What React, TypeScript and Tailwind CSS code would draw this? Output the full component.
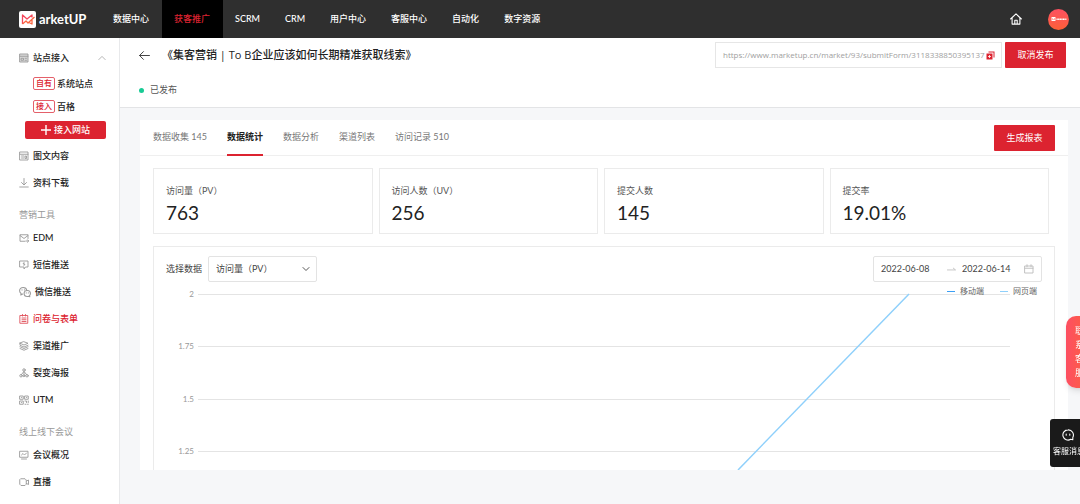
import type { ReactNode } from 'react';
import { clsx } from 'clsx';

interface NavItem {
  label: string;
  active?: boolean;
}

interface MenuItem {
  label: string;
  icon: ReactNode;
  active?: boolean;
}

const NAV: NavItem[] = [
  { label: '数据中心' },
  { label: '获客推广', active: true },
  { label: 'SCRM' },
  { label: 'CRM' },
  { label: '用户中心' },
  { label: '客服中心' },
  { label: '自动化' },
  { label: '数字资源' },
];

function Icon({ children, size = 'size-2.5', className }: { children: ReactNode; size?: string; className?: string }) {
  return (
    <svg
      viewBox="0 0 20 20"
      className={clsx('shrink-0', size, className)}
      fill="none"
      stroke="currentColor"
      strokeWidth="1.8"
      strokeLinecap="round"
      strokeLinejoin="round"
      aria-hidden="true"
    >
      {children}
    </svg>
  );
}

const siteIcon = (
  <Icon>
    <rect x="2" y="2" width="16" height="16" fill="#dcdcdc" />
    <path d="M2 6.500h16M5 10.500h4v4H5zM12 10.500h3M12 14.500h3" />
  </Icon>
);

const articleIcon = (
  <Icon>
    <path d="M2 2h16v16H2zM2 6.500h16M5 10h5M5 14h5M13 10h2v5h-2z" />
  </Icon>
);

const downloadIcon = (
  <Icon>
    <path d="M10 1v12M5 9l5 5 5-5M1.500 18h17" />
  </Icon>
);

const mailIcon = (
  <Icon>
    <path d="M18 11V3.500H2v13h10M2 5l8 6 8-6M14 16h5M17 13.500l2.500 2.500-2.500 2.500" />
  </Icon>
);

const smsIcon = (
  <Icon>
    <path d="M2 2h16v12h-5l-3 4v-4H2zM10 5l-2 3h4l-2 3" />
  </Icon>
);

const wechatIcon = (
  <Icon size="size-3">
    <path d="M13 7.500C12.500 4 10 2.500 7 2.500 3.500 2.500 1 5 1 8c0 2 1 3.500 2.500 4.500L3 15l3-1.500" />
    <path d="M19 12.500c0-2.800-2.200-5-5.200-5s-5.300 2.200-5.300 5 2.300 5 5.300 5c.8 0 1.500-.1 2.200-.4l2 .9-.4-1.900c.9-1 1.400-2.200 1.400-3.600z" />
    <path d="M5 6.500h.1M9 6.500h.1M12 11.500h.1M15.500 11.500h.1" />
  </Icon>
);

const formIcon = (
  <Icon>
    <path d="M2.500 3h15v15.500h-15zM7 1v3M13 1v3M6 8h8M6 11.500h8M6 15h8" />
  </Icon>
);

const layersIcon = (
  <Icon>
    <path d="M10 1.500l8 3-8 3.500-8-3.500zM2 4.500v4l8 3.500 8-3.500M2 11.500l8 3.500 8-3.500M2 15l8 3.500 8-3.500" />
  </Icon>
);

const fissionIcon = (
  <Icon>
    <circle cx="10" cy="4" r="2.500" />
    <circle cx="4" cy="15.500" r="2.500" />
    <circle cx="10" cy="15.500" r="2" />
    <circle cx="16" cy="15.500" r="2.500" />
    <path d="M10 6.500v7M9 8l-4 5M11 8l4 5" />
  </Icon>
);

const utmIcon = (
  <Icon>
    <path d="M2 2h6.500v6.500H2zM12 2h6.500v6.500H12zM2 12h6.500v6.500H2zM12 12h3v3M18.500 12v3M12 18.500h2M18.500 18.500h-1.500M5 5h.5M15 5h.5M5 15h.5" />
  </Icon>
);

const boardIcon = (
  <Icon>
    <path d="M2 2.500h16v12H2zM5 10l3-3 3 3 4-4M5 18h10" />
  </Icon>
);

const videoIcon = (
  <Icon>
    <path d="M4 3.500h8l2.500 2.500v8.500L12 17H4l-2.500-2.500V6zM15 8l4-2v9l-4-2" />
  </Icon>
);

const CONTENT_MENU: MenuItem[] = [
  { label: '图文内容', icon: articleIcon },
  { label: '资料下载', icon: downloadIcon },
];

const TOOL_MENU: MenuItem[] = [
  { label: 'EDM', icon: mailIcon },
  { label: '短信推送', icon: smsIcon },
  { label: '微信推送', icon: wechatIcon },
  { label: '问卷与表单', icon: formIcon, active: true },
  { label: '渠道推广', icon: layersIcon },
  { label: '裂变海报', icon: fissionIcon },
  { label: 'UTM', icon: utmIcon },
];

const MEETING_MENU: MenuItem[] = [
  { label: '会议概况', icon: boardIcon },
  { label: '直播', icon: videoIcon },
];

const SITES = [
  { tag: '自有', label: '系统站点' },
  { tag: '接入', label: '百格' },
];

const TABS: NavItem[] = [
  { label: '数据收集 145' },
  { label: '数据统计', active: true },
  { label: '数据分析' },
  { label: '渠道列表' },
  { label: '访问记录 510' },
];

const STATS = [
  { label: '访问量（PV）', value: '763' },
  { label: '访问人数（UV）', value: '256' },
  { label: '提交人数', value: '145' },
  { label: '提交率', value: '19.01%' },
];

const TICKS = [
  { label: '2', y: 11 },
  { label: '1.75', y: 63 },
  { label: '1.5', y: 116 },
  { label: '1.25', y: 168 },
];

function Logo() {
  return (
    <a href="#" className="flex w-[101px] shrink-0 items-center gap-[3px] pl-[19px] text-[13px] font-bold text-white">
      <svg viewBox="0 0 34 34" className="size-[17px] shrink-0" aria-hidden="true">
        <rect width="34" height="34" rx="4" fill="#fff" />
        <path d="M7 26V8l9 8 10-8v5" fill="none" stroke="#f4475c" strokeWidth="2.600" strokeLinejoin="round" />
        <path d="M7 26l7-6 4 4 13-12M26 18v8l-6-3" fill="none" stroke="#fb6440" strokeWidth="2.600" strokeLinejoin="round" />
      </svg>
      arketUP
    </a>
  );
}

function MenuList({ items }: { items: MenuItem[] }) {
  return (
    <ul>
      {items.map((item) => (
        <li key={item.label}>
          <a
            href="#"
            className={clsx(
              'flex h-[27px] items-center gap-1 pl-[19px] font-medium',
              item.active ? 'text-[#dc2330]' : 'text-[#222]'
            )}
          >
            <span className={clsx('flex', item.active ? 'text-[#e0505a]' : 'text-[#999]')}>{item.icon}</span>
            {item.label}
          </a>
        </li>
      ))}
    </ul>
  );
}

function Sidebar() {
  return (
    <aside className="w-[120px] shrink-0 border-r border-[#e8e9eb] bg-white pt-1.5">
      <button type="button" className="flex h-[27px] w-full items-center gap-1 pr-[13px] pl-[19px] font-medium text-[#222]">
        <span className="flex text-[#999]">{siteIcon}</span>
        站点接入
        <Icon size="size-2" className="ml-auto text-[#999]">
          <path d="M2 14l8-8 8 8" />
        </Icon>
      </button>
      <ul className="mt-px">
        {SITES.map((site) => (
          <li key={site.tag}>
            <a href="#" className="flex h-[23px] items-center gap-[2px] pl-[33px] font-medium text-[#222]">
              <span className="rounded-xs border border-[#e4606a] px-[2px] text-[8px] leading-[11px] text-[#dc2330]">{site.tag}</span>
              {site.label}
            </a>
          </li>
        ))}
      </ul>
      <button
        type="button"
        className="mt-[3px] mb-[3px] ml-[25px] flex h-[18px] w-[81px] items-center justify-center gap-[3px] rounded-xs bg-[#dc2330] font-medium text-white"
      >
        <svg viewBox="0 0 10 10" className="size-2.5" aria-hidden="true">
          <path d="M5 0v10M0 5h10" stroke="currentColor" strokeWidth="1.400" />
        </svg>
        接入网站
      </button>
      <MenuList items={CONTENT_MENU} />
      <h2 className="mt-2.5 pl-[19px] leading-[18px] text-[#999]">营销工具</h2>
      <MenuList items={TOOL_MENU} />
      <h2 className="mt-2.5 pl-[19px] leading-[18px] text-[#999]">线上线下会议</h2>
      <MenuList items={MEETING_MENU} />
    </aside>
  );
}

function PageHeader() {
  return (
    <div className="border-b border-[#e3e4e6] bg-white pt-1 pr-[14px] pl-[19px]">
      <div className="flex items-center">
        <button type="button" aria-label="返回" className="mr-3 text-[#444]">
          <Icon size="size-[11px]">
            <path d="M19 10H1M8 3l-7 7 7 7" />
          </Icon>
        </button>
        <h1 className="font-['Open_Sans','Noto_Sans_CJK_SC',sans-serif] text-[11px] font-medium text-[#222]">
          《集客营销 | To B企业应该如何长期精准获取线索》
        </h1>
        <div className="ml-auto flex h-[26px] w-[287px] items-center border border-[#e6e6e6] pr-1.5 pl-[7px]">
          <input
            type="text"
            readOnly
            aria-label="表单链接"
            value="https://www.marketup.cn/market/93/submitForm/3118338850395137"
            className="min-w-0 flex-1 font-['Open_Sans',sans-serif] text-[8px] text-[#a0a0a0] outline-none"
          />
          <button type="button" aria-label="复制" className="text-[#dc2330]">
            <svg viewBox="0 0 18 18" className="size-[9px]" aria-hidden="true">
              <path d="M5 1h12v12h-2V3H5z" fill="currentColor" />
              <path d="M1 5h12v12H1z" fill="currentColor" />
              <path d="M7 8v6M4 11h6" stroke="#fff" strokeWidth="1.600" />
            </svg>
          </button>
        </div>
        <button type="button" className="ml-[3px] h-[26px] w-[61px] rounded-[1px] bg-[#dc2330] text-white">
          取消发布
        </button>
      </div>
      <div className="mt-3.5 mb-[9px] flex items-center gap-1.5 text-[#555] leading-4">
        <span className="size-[5px] rounded-full bg-[#18cb95]" />
        已发布
      </div>
    </div>
  );
}

function TrendChart() {
  return (
    <div className="relative">
      <svg viewBox="0 0 900 187" className="block w-full" role="img" aria-label="访问量趋势">
        {TICKS.map((tick) => (
          <g key={tick.label}>
            <text x="40" y={tick.y + 3} textAnchor="end" fontSize="8" fill="#999">
              {tick.label}
            </text>
            <path d={`M44 ${tick.y + 0.5}H856`} stroke="#e4e4e4" />
          </g>
        ))}
        <path d="M755 11L584 187" fill="none" stroke="#8fd0fb" strokeWidth="1.500" />
      </svg>
      <ul className="absolute top-0.5 right-[17px] flex gap-4 text-[8px] leading-3 text-[#666]">
        <li className="flex items-center gap-[5px]">
          <span className="h-px w-2 bg-[#3b9ff5]" />
          移动端
        </li>
        <li className="flex items-center gap-[5px]">
          <span className="h-px w-2 bg-[#8fd0fb]" />
          网页端
        </li>
      </ul>
    </div>
  );
}

function ChartPanel() {
  return (
    <section className="mt-3 border border-b-0 border-[#ebebeb]">
      <div className="flex items-center pt-[9px] pr-3 pb-px pl-3 text-[#444]">
        <label htmlFor="metric" className="mr-1.5">
          选择数据
        </label>
        <div className="relative">
          <select id="metric" className="h-[26px] w-[109px] appearance-none rounded-xs border border-[#e3e3e3] bg-white pl-[7px]">
            <option>访问量（PV）</option>
          </select>
          <Icon className="pointer-events-none absolute top-2 right-1.5">
            <path d="M4 7l6 6 6-6" />
          </Icon>
        </div>
        <div className="ml-auto flex h-[26px] w-[169px] items-center rounded-xs border border-[#e3e3e3] px-[7px]">
          <input type="text" aria-label="开始日期" defaultValue="2022-06-08" className="w-[66px] outline-none" />
          <Icon size="size-[9px]" className="mr-1.5 text-[#bbb]">
            <path d="M1 11h18l-5-4" />
          </Icon>
          <input type="text" aria-label="结束日期" defaultValue="2022-06-14" className="w-[60px] outline-none" />
          <Icon className="ml-auto text-[#bbb]">
            <path d="M2 4h16v14H2zM2 8.500h16M6 1.500v4M14 1.500v4" />
          </Icon>
        </div>
      </div>
      <TrendChart />
    </section>
  );
}

function Report() {
  return (
    <div className="mt-3 mr-3 ml-5 bg-white">
      <div className="flex h-9 items-center border-b border-[#efefef] px-[13px]">
        <nav className="flex h-9 gap-5">
          {TABS.map((tab) => (
            <a
              key={tab.label}
              href="#"
              className={clsx(
                'flex items-center border-b-2',
                tab.active ? 'border-[#dc2330] font-bold text-[#222]' : 'border-transparent text-[#777]'
              )}
            >
              {tab.label}
            </a>
          ))}
        </nav>
        <button type="button" className="ml-auto h-[26px] w-[61px] rounded-[1px] bg-[#dc2330] text-white">
          生成报表
        </button>
      </div>
      <div className="px-[13px] pt-3">
        <div className="grid grid-cols-4 gap-1.5 pr-1.5">
          {STATS.map((stat) => (
            <div key={stat.label} className="h-[66px] border border-[#ebebeb] px-3 pt-[15px]">
              <div className="leading-[14px] text-[#555]">{stat.label}</div>
              <div className="mt-[3px] text-[19px] leading-6 text-[#222]">{stat.value}</div>
            </div>
          ))}
        </div>
        <ChartPanel />
      </div>
    </div>
  );
}

export default function App() {
  return (
    <div className="flex min-h-screen flex-col overflow-x-hidden bg-[#f6f7f9] font-[Lato,'Noto_Sans_CJK_SC',sans-serif] text-[9px] leading-[14px]">
      <header className="flex h-[38px] items-stretch bg-[#2f2f2f] text-white">
        <Logo />
        <nav className="flex">
          {NAV.map((item) => (
            <a
              key={item.label}
              href="#"
              className={clsx('flex items-center pr-[13px] pl-3 font-medium', item.active && 'bg-black text-[#dc2330]')}
            >
              {item.label}
            </a>
          ))}
        </nav>
        <div className="ml-auto flex items-center gap-[26px] pr-[11px]">
          <a href="#" aria-label="首页">
            <Icon size="size-3">
              <path d="M1 10l9-8.500 9 8.500M3.500 8.500v10h13v-10M8 18v-6h4v6" />
            </Icon>
          </a>
          <button
            type="button"
            aria-label="账户"
            className="flex size-[21px] items-center justify-center rounded-full bg-linear-to-b from-[#fd5060] to-[#fd6035]"
          >
            <svg viewBox="0 0 32 8" className="w-4" aria-hidden="true">
              <rect x="1" y="0" width="8" height="8" rx="1" fill="#fff" />
              <path d="M3 6V3l2 2 2-2v3" fill="none" stroke="#fd5850" />
              <path d="M11 4.500h20" stroke="#fff" strokeWidth="3" strokeDasharray="2.500 .7" />
            </svg>
          </button>
        </div>
      </header>

      <div className="flex flex-1">
        <Sidebar />
        <main className="min-w-0 flex-1">
          <PageHeader />
          <Report />
        </main>
      </div>

      <button
        type="button"
        className="fixed top-[316px] -right-3 w-[26px] rounded-[10px] bg-linear-to-r from-[#fd4f62] to-[#fd6035] py-2 pl-[9px] text-left leading-[14px] break-all text-white shadow-md"
      >
        联系客服
      </button>
      <button
        type="button"
        className="fixed top-[419px] -right-2 flex h-12 w-[38px] flex-col items-center justify-center gap-1 rounded-[3px] bg-[#1a1a1a] text-[8px] leading-3 whitespace-nowrap text-white"
      >
        <Icon size="size-3" className="mr-0.5">
          <path d="M10 1.500a8.500 8.500 0 1 0 4.500 15.700l3.500.8v-4A8.500 8.500 0 0 0 10 1.500zM7 8.500v2M13 8.500v2" />
        </Icon>
        客服消息
      </button>
    </div>
  );
}
